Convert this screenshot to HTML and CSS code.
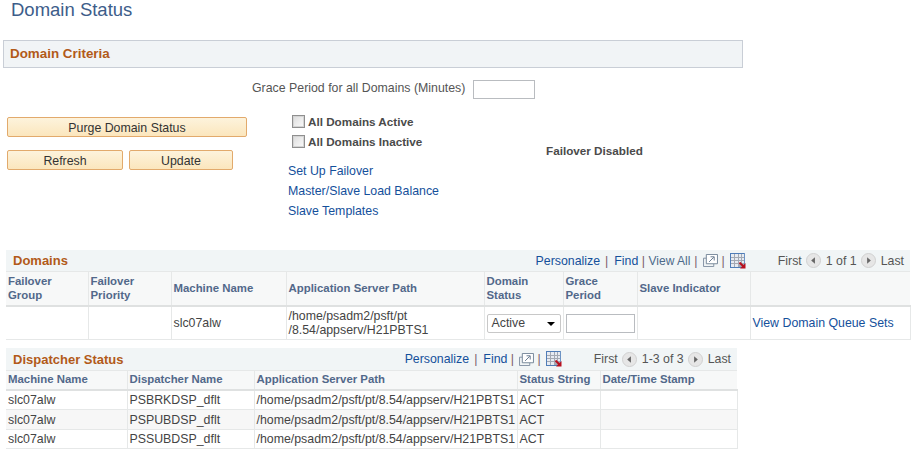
FILE: index.html
```html
<!DOCTYPE html>
<html lang="en">
<head>
    <meta charset="UTF-8">
    <title>Domain Status</title>
    <link rel="stylesheet" href="styles.css">
</head>
<body>
    <svg class="icon-defs" width="0" height="0">
        <defs>
            <symbol id="icon-zoom" viewBox="0 0 16 14">
                <path d="M3.5 4.5H0.5V13.5H11.5V10.5" fill="none" stroke="#7d8ea0"/>
                <path d="M3.5 0.5H15.5V10.5H3.5Z" fill="#fff" stroke="#6f8294"/>
                <path d="M6.5 8.5 11.5 3.5M8 3H12V7" fill="none" stroke="#5f7389"/>
            </symbol>
            <symbol id="icon-download" viewBox="0 0 16 16">
                <rect x="0" y="0" width="15" height="15" fill="#a3a9b3"/>
                <rect x="0" y="0" width="15" height="1" fill="#4f7db8"/>
                <rect x="0" y="0" width="1" height="15" fill="#4f7db8"/>
                <rect x="14" y="0" width="1" height="15" fill="#6d93c4"/>
                <rect x="0" y="14" width="15" height="1" fill="#4f7db8"/>
                <path d="M1 1H4V4H1ZM5 1H8V4H5ZM9 1H11V4H9ZM12 1H14V4H12ZM1 5H4V7H1ZM5 5H8V7H5ZM9 5H11V7H9ZM12 5H14V7H12ZM1 8H4V10H1ZM5 8H8V10H5ZM9 8H11V10H9ZM12 8H14V10H12ZM1 11H4V14H1ZM5 11H8V14H5Z" fill="#e6ebf2"/>
                <path d="M9.5 9.5 14 14" fill="none" stroke="#b80f1e" stroke-width="2"/>
                <path d="M15.5 10V15.5H10Z" fill="#b80f1e"/>
            </symbol>
            <symbol id="icon-prev" viewBox="0 0 16 16">
                <circle cx="8" cy="8" r="7.5" fill="#e6e6e6" stroke="#cfcfcf"/>
                <path d="M9.5 4.5V11.5L5.5 8Z" fill="#666"/>
            </symbol>
            <symbol id="icon-next" viewBox="0 0 16 16">
                <circle cx="8" cy="8" r="7.5" fill="#e6e6e6" stroke="#cfcfcf"/>
                <path d="M6.5 4.5V11.5L10.5 8Z" fill="#666"/>
            </symbol>
        </defs>
    </svg>

    <h1 class="page-title">Domain Status</h1>

    <div class="section-bar"><h2>Domain Criteria</h2></div>

    <div class="grace-row">
        <label>Grace Period for all Domains (Minutes)</label>
        <input type="text" class="text-input grace-input">
    </div>

    <div class="criteria">
        <div class="actions">
            <button class="ps-btn purge-btn">Purge Domain Status</button>
            <div class="btn-row">
                <button class="ps-btn refresh-btn">Refresh</button>
                <button class="ps-btn update-btn">Update</button>
            </div>
        </div>
        <div class="options">
            <label class="check"><span class="check-box"></span>All Domains Active</label>
            <label class="check"><span class="check-box"></span>All Domains Inactive</label>
            <a class="ps-link option-link first-link" href="#">Set Up Failover</a>
            <a class="ps-link option-link" href="#">Master/Slave Load Balance</a>
            <a class="ps-link option-link" href="#">Slave Templates</a>
        </div>
        <div class="failover-state">Failover Disabled</div>
    </div>

    <div class="grid domains-grid">
        <div class="grid-bar">
            <h2>Domains</h2>
            <div class="grid-tools">
                <a class="ps-link" href="#">Personalize</a><span class="sep sep-wide">|</span>
                <a class="ps-link" href="#">Find</a><span class="sep sep-tight">|</span>
                <span class="tool-text">View All</span><span class="sep">|</span>
                <svg class="tool-zoom"><use href="#icon-zoom"/></svg><span class="sep">|</span>
                <svg class="tool-download"><use href="#icon-download"/></svg>
                <span class="pager">
                    First
                    <svg class="pager-icon"><use href="#icon-prev"/></svg>
                    1 of 1
                    <svg class="pager-icon"><use href="#icon-next"/></svg>
                    Last
                </span>
            </div>
        </div>
        <table class="grid-table">
            <colgroup>
                <col class="dc1"><col class="dc2"><col class="dc3"><col class="dc4">
                <col class="dc5"><col class="dc6"><col class="dc7"><col class="dc8">
            </colgroup>
            <thead>
                <tr>
                    <th>Failover<br>Group</th>
                    <th>Failover<br>Priority</th>
                    <th>Machine Name</th>
                    <th>Application Server Path</th>
                    <th>Domain<br>Status</th>
                    <th>Grace<br>Period</th>
                    <th>Slave Indicator</th>
                    <th></th>
                </tr>
            </thead>
            <tbody>
                <tr>
                    <td></td>
                    <td></td>
                    <td>slc07alw</td>
                    <td>/home/psadm2/psft/pt<br>/8.54/appserv/H21PBTS1</td>
                    <td>
                        <div class="select-box">Active<span class="select-arrow"></span></div>
                    </td>
                    <td><input type="text" class="text-input row-input"></td>
                    <td></td>
                    <td><a class="ps-link" href="#">View Domain Queue Sets</a></td>
                </tr>
            </tbody>
        </table>
    </div>

    <div class="grid dispatcher-grid">
        <div class="grid-bar">
            <h2>Dispatcher Status</h2>
            <div class="grid-tools">
                <a class="ps-link" href="#">Personalize</a><span class="sep sep-wide">|</span>
                <a class="ps-link" href="#">Find</a><span class="sep sep-tight">|</span>
                <svg class="tool-zoom"><use href="#icon-zoom"/></svg><span class="sep">|</span>
                <svg class="tool-download"><use href="#icon-download"/></svg>
                <span class="pager">
                    First
                    <svg class="pager-icon"><use href="#icon-prev"/></svg>
                    1-3 of 3
                    <svg class="pager-icon"><use href="#icon-next"/></svg>
                    Last
                </span>
            </div>
        </div>
        <table class="grid-table">
            <colgroup>
                <col class="pc1"><col class="pc2"><col class="pc3"><col class="pc4"><col class="pc5">
            </colgroup>
            <thead>
                <tr>
                    <th>Machine Name</th>
                    <th>Dispatcher Name</th>
                    <th>Application Server Path</th>
                    <th>Status String</th>
                    <th>Date/Time Stamp</th>
                </tr>
            </thead>
            <tbody>
                <tr><td>slc07alw</td><td>PSBRKDSP_dflt</td><td>/home/psadm2/psft/pt/8.54/appserv/H21PBTS1</td><td>ACT</td><td></td></tr>
                <tr class="alt tall"><td>slc07alw</td><td>PSPUBDSP_dflt</td><td>/home/psadm2/psft/pt/8.54/appserv/H21PBTS1</td><td>ACT</td><td></td></tr>
                <tr><td>slc07alw</td><td>PSSUBDSP_dflt</td><td>/home/psadm2/psft/pt/8.54/appserv/H21PBTS1</td><td>ACT</td><td></td></tr>
            </tbody>
        </table>
    </div>
</body>
</html>
```

FILE: styles.css
```css
* {
    box-sizing: border-box;
    margin: 0;
    padding: 0;
}

body {
    background-color: #fff;
    color: #444;
    font-family: "Liberation Sans", Arial, sans-serif;
    font-size: 12.35px;
    width: 913px;
    height: 452px;
    overflow: hidden;
}

.icon-defs {
    display: block;
    height: 0;
}

.page-title {
    font-size: 18.5px;
    font-weight: normal;
    color: #3d5d8a;
    line-height: 20px;
    padding-left: 11px;
    height: 21px;
}

.section-bar {
    width: 740px;
    height: 28px;
    margin: 19px 0 0 3px;
    background-color: #f1f4f6;
    border: 1px solid #c9ced6;
    padding-left: 6px;
}

.section-bar h2,
.grid-bar h2 {
    font-size: 13px;
    font-weight: bold;
    color: #b25a19;
}

.section-bar h2 {
    font-size: 13.4px;
    line-height: 25px;
}

.grace-row {
    display: flex;
    align-items: flex-start;
    height: 19px;
    margin: 12px 0 0 252px;
    color: #555;
}

.grace-row label {
    line-height: 16px;
}

.text-input {
    border: 1px solid #b9bcc0;
    background-color: #fff;
    display: block;
}

.grace-input {
    width: 62px;
    height: 19px;
    margin-left: 8px;
}

.criteria {
    display: flex;
    margin-top: 9px;
    height: 142px;
}

.actions {
    width: 288px;
    padding: 9px 0 0 7px;
}

.ps-btn {
    display: block;
    height: 20px;
    padding-top: 1px;
    font-family: inherit;
    font-size: 12.35px;
    color: #333;
    background: linear-gradient(#fdf3dc, #fbe6bd);
    border: 1px solid #e2aa6c;
    border-radius: 2px;
}

.purge-btn {
    width: 240px;
}

.btn-row {
    display: flex;
    gap: 6px;
    margin-top: 13px;
}

.refresh-btn {
    width: 116px;
}

.update-btn {
    width: 104px;
}

.options {
    width: 258px;
    padding-top: 3px;
    display: flex;
    flex-direction: column;
    align-items: flex-start;
}

.check {
    display: flex;
    align-items: center;
    height: 20px;
    margin-left: 4px;
    font-size: 11.7px;
    font-weight: bold;
    color: #4a4a4a;
}

.check-box {
    width: 13px;
    height: 13px;
    margin-right: 3px;
    border: 1px solid #8f8f8f;
    background: linear-gradient(135deg, #dcdcdc, #fbfbfb);
    box-shadow: inset 0 0 0 1px #d4d4d4;
}

.ps-link {
    color: #14509b;
    text-decoration: none;
}

.option-link {
    line-height: 20px;
}

.first-link {
    margin-top: 10px;
}

.failover-state {
    font-size: 11.7px;
    font-weight: bold;
    color: #4a4a4a;
    padding-top: 36px;
}

.grid {
    margin-left: 6px;
}

.domains-grid {
    width: 904px;
}

.dispatcher-grid {
    width: 731px;
    margin-top: 8px;
}

.dispatcher-grid .grid-bar {
    height: 23px;
}

.grid-bar {
    display: flex;
    justify-content: space-between;
    align-items: center;
    height: 22px;
    background-color: #f1f5f6;
    border-bottom: 1px solid #e6e8e8;
    padding-left: 7px;
}

.grid-tools {
    display: flex;
    align-items: center;
    color: #555;
    padding-right: 6px;
}

.sep {
    color: #7a5a6a;
    margin: 0 4px;
}

.sep-wide {
    margin: 0 6px 0 5px;
}

.sep-tight {
    margin: 0 3.5px;
}

.tool-text {
    color: #4d6a8a;
    font-size: 12px;
}

.tool-zoom {
    width: 15px;
    height: 13px;
    margin-left: 1px;
}

.tool-download {
    width: 16px;
    height: 16px;
    margin-left: 1px;
}

.pager {
    display: flex;
    align-items: center;
    gap: 4.5px;
    margin-left: 32px;
    color: #555;
}

.pager-icon {
    width: 15px;
    height: 15px;
}

.grid-table {
    width: 100%;
    border-collapse: collapse;
    table-layout: fixed;
}

.grid-table th {
    background-color: #f7f8f8;
    color: #52688a;
    font-size: 11.4px;
    font-weight: bold;
    text-align: left;
    line-height: 14px;
    padding: 1px 2px 3px;
    border-left: 1px solid #e6e8e8;
    border-bottom: 2px solid #dfe1e1;
}

.grid-table td {
    color: #444;
    line-height: 14px;
    padding: 2px;
    border-left: 1px solid #e6e8e8;
    border-right: 1px solid #e6e8e8;
    border-bottom: 1px solid #e6e8e8;
    height: 19px;
}

.grid-table tr.tall td {
    height: 20px;
}

.grid-table th:first-child,
.grid-table td:first-child {
    border-left: none;
}

.grid-table tr.alt td {
    background-color: #f7f7f7;
}

.domains-grid th {
    padding: 2px 2px 3px;
}

.domains-grid td {
    height: 33px;
}

.dc1 { width: 82px; }
.dc2 { width: 83px; }
.dc3 { width: 115px; }
.dc4 { width: 198px; }
.dc5 { width: 79px; }
.dc6 { width: 74px; }
.dc7 { width: 113px; }
.dc8 { width: 160px; }

.pc1 { width: 121px; }
.pc2 { width: 127px; }
.pc3 { width: 263px; }
.pc4 { width: 83px; }
.pc5 { width: 137px; }

.select-box {
    position: relative;
    width: 74px;
    height: 19px;
    line-height: 17px;
    padding-left: 4px;
    border: 1px solid #c8c8c8;
    border-radius: 2px;
    background-color: #fff;
}

.select-arrow {
    position: absolute;
    right: 5px;
    top: 7px;
    border-left: 4px solid transparent;
    border-right: 4px solid transparent;
    border-top: 4px solid #000;
}

.row-input {
    width: 69px;
    height: 19px;
}
```
